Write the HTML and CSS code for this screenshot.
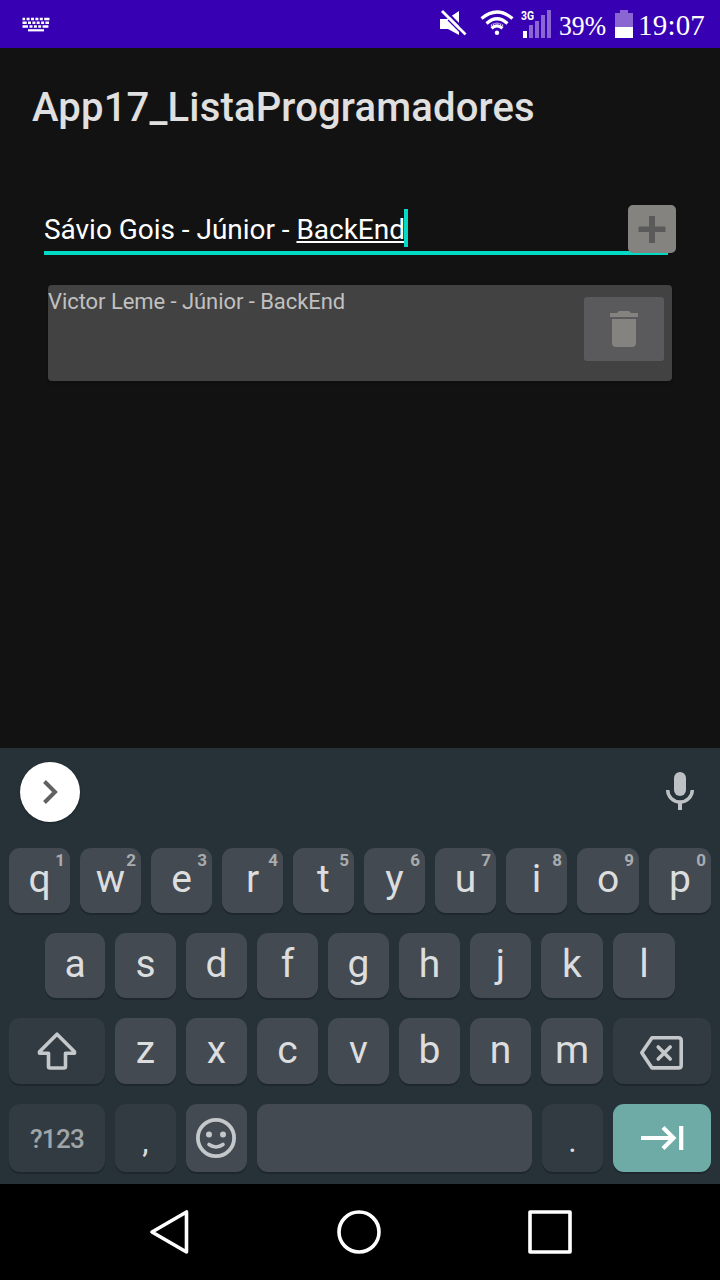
FILE: index.html
```html
<!DOCTYPE html>
<html lang="pt-BR">
<head>
<meta charset="utf-8">
<title>App17_ListaProgramadores</title>
<link rel="stylesheet" href="styles.css">
</head>
<body>
<div class="screen">
  <header class="status">
    <svg class="ime" width="28" height="15" viewBox="0 0 28 15" fill="none" stroke="#fff" stroke-width="2.6">
      <path d="M.5 2h2.6m1.500 0h3m1.400 0h3m1.400 0h3m1.400 0h3m1.400 0h5.300M.5 5.700h4.200m1.300 0h3m1.400 0h3m1.300 0h3m1.400 0h3m1.300 0h3.600M.5 9.500h5.500m1.500 0h3m1.400 0h3m1.300 0h3m1.400 0h5.800"/>
      <path stroke-width="2.200" d="M6 13.300h16"/>
    </svg>
    <svg class="mute" width="28" height="26" viewBox="0 0 28 26">
      <path fill="#fff" d="M0 9h7L19 1v24L8 19H0z"/>
      <path stroke="#3700b3" stroke-width="2.400" d="M4-.5l23 23"/>
      <path stroke="#fff" stroke-width="2.800" d="M2 1l23.500 23.500"/>
      <path stroke="#3700b3" stroke-width="1.200" d="M8 10l18 18"/>
    </svg>
    <svg class="wifi" width="34" height="26" viewBox="0 0 34 26" fill="none" stroke="#fff">
      <path stroke-width="3.200" d="M1.500 8.500Q17-4.500 32.500 8.500M6.500 13.500Q17 4 27.500 13.500"/>
      <path stroke-width="3.200" d="M11.500 18.300Q17 13.500 22.500 18.300"/>
      <path stroke-width="1.500" stroke-dasharray="1 1" d="M11 15.500Q17 11 23 15.500"/>
      <circle cx="17" cy="22.700" r="2.200" fill="#fff" stroke="none"/>
    </svg>
    <svg class="signal" width="31" height="29" viewBox="0 0 31 29">
      <text class="net" x="0" y="10.500" textLength="13" lengthAdjust="spacingAndGlyphs">3G</text>
      <path fill="#fff" d="M2 22h4v7H2z"/>
      <path fill="#8a66d2" d="M8 16h4v13H8zM14 12h4v17h-4zM20 6h4v23h-4zM26 1h4v28h-4z"/>
    </svg>
    <svg class="percent" width="56" height="48" viewBox="0 0 56 48"><text x="0" y="35" textLength="47" lengthAdjust="spacingAndGlyphs">39%</text></svg>
    <svg class="battery" width="18" height="28" viewBox="0 0 18 28">
      <path fill="#8a66d2" d="M5 0h8v3h5v14H0V3h5z"/><path fill="#fff" d="M0 17h18v11H0z"/>
    </svg>
    <span class="clock">19:07</span>
  </header>

  <main class="app">
    <h1 class="title">App17_ListaProgramadores</h1>
    <div class="field">
      <span class="value">Sávio Gois - Júnior - <span class="composing">BackEnd</span></span><span class="caret"></span>
      <div class="add">
        <svg width="48" height="48" viewBox="0 0 48 48"><path fill="#5a5a5a" d="M21 11h6v10.500h10.500v5.500H27v11h-6V27H10.500v-5.500H21z"/></svg>
      </div>
    </div>
    <div class="card">
      <span class="name">Victor Leme - Júnior - BackEnd</span>
      <div class="delete">
        <svg width="28" height="36" viewBox="0 0 28 36" fill="#84837f"><path d="M0 2h7l2-2h10l2 2h7v4H0zM2 8h24v24q0 4-4 4H6q-4 0-4-4z"/></svg>
      </div>
    </div>
  </main>

  <section class="keyboard">
    <div class="tools">
      <div class="expand"><svg width="60" height="60" viewBox="0 0 60 60"><path fill="none" stroke="#616161" stroke-width="4" d="M24.500 19.500L35 30 24.500 40.500"/></svg></div>
      <svg class="mic" width="28" height="38" viewBox="0 0 28 38"><rect x="8" y="0" width="12" height="24" rx="6" fill="#bdc1c6"/><path fill="none" stroke="#bdc1c6" stroke-width="3.400" d="M1.700 18a12.300 12 0 0 0 24.600 0"/><path fill="#bdc1c6" d="M12 30h4v8h-4z"/></svg>
    </div>
    <div class="row">
      <div class="key">q<i class="hint">1</i></div><div class="key">w<i class="hint">2</i></div><div class="key">e<i class="hint">3</i></div><div class="key">r<i class="hint">4</i></div><div class="key">t<i class="hint">5</i></div><div class="key">y<i class="hint">6</i></div><div class="key">u<i class="hint">7</i></div><div class="key">i<i class="hint">8</i></div><div class="key wide">o<i class="hint">9</i></div><div class="key wide">p<i class="hint">0</i></div>
    </div>
    <div class="row home">
      <div class="key first">a</div><div class="key">s</div><div class="key">d</div><div class="key">f</div><div class="key">g</div><div class="key">h</div><div class="key">j</div><div class="key wide">k</div><div class="key wide">l</div>
    </div>
    <div class="row third">
      <div class="key dark side"><svg width="96" height="66" viewBox="0 0 96 66"><path fill="none" stroke="#c5c8cb" stroke-width="3.600" stroke-linejoin="round" d="M48 16.200L30.500 33.800v1.400H39.500v13.300q0 1.500 1.500 1.500h14q1.500 0 1.500-1.500V35.200h9v-1.400z"/></svg></div>
      <div class="key">z</div><div class="key">x</div><div class="key">c</div><div class="key">v</div><div class="key">b</div><div class="key">n</div><div class="key wide">m</div>
      <div class="key dark end"><svg width="98" height="66" viewBox="0 0 98 66" fill="none" stroke="#c5c8cb" stroke-width="3.600" stroke-linejoin="round"><path d="M28.800 34.700L39 19.800h26.500q2.700 0 2.700 2.700v24.700q0 2.700-2.700 2.700H39z"/><path stroke-linecap="round" d="M45.200 29l12 12m0-12l-12 12"/></svg></div>
    </div>
    <div class="row fourth">
      <div class="key dark side symbols">?123</div>
      <div class="key dark punct comma">,</div>
      <div class="key emoji"><svg width="40" height="40" viewBox="0 0 40 40"><g fill="none" stroke="#c5c8cb"><circle cx="20" cy="20" r="18.100" stroke-width="3.800"/><path stroke-width="3.600" stroke-linecap="round" d="M13 26.500q7 5 14 0"/></g><circle cx="13" cy="16.500" r="3" fill="#c5c8cb"/><circle cx="27" cy="16.500" r="3" fill="#c5c8cb"/></svg></div>
      <div class="key space"></div>
      <div class="key dark punct dot">.</div>
      <div class="key next"><svg width="98" height="68" viewBox="0 0 98 68"><path fill="none" stroke="#fff" stroke-width="4.200" d="M28 34h33M50 23.500L60.500 34 50 44.500M68.200 22v24"/></svg></div>
    </div>
  </section>

  <nav class="nav">
    <svg width="720" height="96" viewBox="0 0 720 96" fill="none" stroke="#fff" stroke-width="3.600" stroke-linejoin="round"><path d="M152 48l34.500-20v40z"/><circle cx="359" cy="48" r="20"/><rect x="530" y="28" width="40" height="40"/></svg>
  </nav>
</div>
</body>
</html>
```
FILE: styles.css
```css
body { margin: 0; background: #121212; }
svg { display: block; flex: none; }
.screen {
  width: 720px; height: 1280px; overflow: hidden;
  display: flex; flex-direction: column;
  background: #121212; color: #fff;
  font-family: Roboto, "Noto Sans", sans-serif;
}

.status { height: 48px; display: flex; background: #3700b3; box-sizing: border-box; padding-left: 22px; }
.ime { margin: 17px 390px 0 0; }
.mute { margin: 10px 12px 0 0; }
.wifi { margin: 10px 7px 0 0; }
.signal { margin: 9px 7px 0 0; overflow: visible; }
.net { font: 700 12px Roboto, sans-serif; fill: #fff; }
.percent { font-family: "Liberation Serif", serif; font-size: 27px; fill: #fff; stroke: #fff; stroke-width: 0.1px; }
.battery { margin: 10px 5px 0 0; }
.clock { font-family: "Liberation Serif", serif; font-size: 29px; line-height: 50px; white-space: nowrap; letter-spacing: 0.2px; }

.app { height: 700px; display: flex; flex-direction: column; }
.title { margin: 36px 32px 0; font-size: 40px; line-height: 48px; font-weight: 500; letter-spacing: 0.17px; color: #e0e0e0; white-space: nowrap; }
.field {
  position: relative; display: flex; align-items: flex-start;
  box-sizing: border-box; width: 624px; height: 46px;
  margin: 77px 0 0 44px; border-bottom: 4px solid #03dac5;
}
.value { font-size: 28px; line-height: 42px; letter-spacing: -0.03px; white-space: nowrap; }
.composing { text-decoration: underline; text-decoration-thickness: 2px; text-underline-offset: 2px; text-decoration-skip-ink: none; }
.caret { width: 4px; height: 38px; margin-left: -1px; background: #03dac5; }
.add { position: absolute; right: -8px; top: -4px; width: 48px; height: 48px; border-radius: 5px; background: #84837f; }
.card {
  display: flex; justify-content: space-between; box-sizing: border-box;
  width: 624px; height: 96px; margin: 30px 0 0 48px; padding-right: 8px;
  border-radius: 4px; background: #424242; box-shadow: 0 2px 3px #0f0f0f;
}
.name { font-size: 22px; line-height: 34px; letter-spacing: -0.06px; color: #c0c0c0; }
.delete {
  display: flex; justify-content: center; box-sizing: border-box;
  width: 80px; height: 64px; margin-top: 12px; padding-top: 14px;
  border-radius: 3px; background: #5a5a5c;
}

.keyboard { height: 436px; background: #263238; }
.tools { height: 100px; display: flex; justify-content: space-between; box-sizing: border-box; padding: 14px 26px 0 20px; }
.expand { width: 60px; height: 60px; border-radius: 50%; background: #fff; box-shadow: 0 1px 2px #1b2429; }
.mic { margin-top: 10px; }
.row { display: flex; gap: 10px; height: 65px; margin: 0 9px 20px; }
.home { margin-left: 45px; }
.third { height: 66px; }
.fourth { height: 68px; margin-bottom: 0; }
.key {
  position: relative; flex: none; width: 61px; box-sizing: border-box; padding-bottom: 2px;
  display: flex; align-items: center; justify-content: center;
  border-radius: 11px; background: #434a51; box-shadow: 0 2px 0 #1e272d;
  font-size: 39px; line-height: 1; color: #dcddde;
}
.wide { width: 62px; }
.first { width: 60px; }
.hint { position: absolute; right: 5px; top: 3px; font-style: normal; font-weight: 700; font-size: 17px; line-height: 18px; color: #a9acae; }
.dark { background: #313b41; }
.side { width: 96px; }
.end, .next { width: 98px; }
.third .side, .third .end { padding: 0; }
.symbols { font-size: 26px; font-weight: 500; letter-spacing: -0.7px; color: #a0a5a8; padding: 2px 0 0; }
.punct { font-size: 32px; padding: 5px 0 0; }
.emoji { padding: 0 1px 0 0; }
.next { padding: 0; }
.space { width: 275px; }
.next { background: #6eaba7; }

.nav { height: 96px; background: #000; }
```
